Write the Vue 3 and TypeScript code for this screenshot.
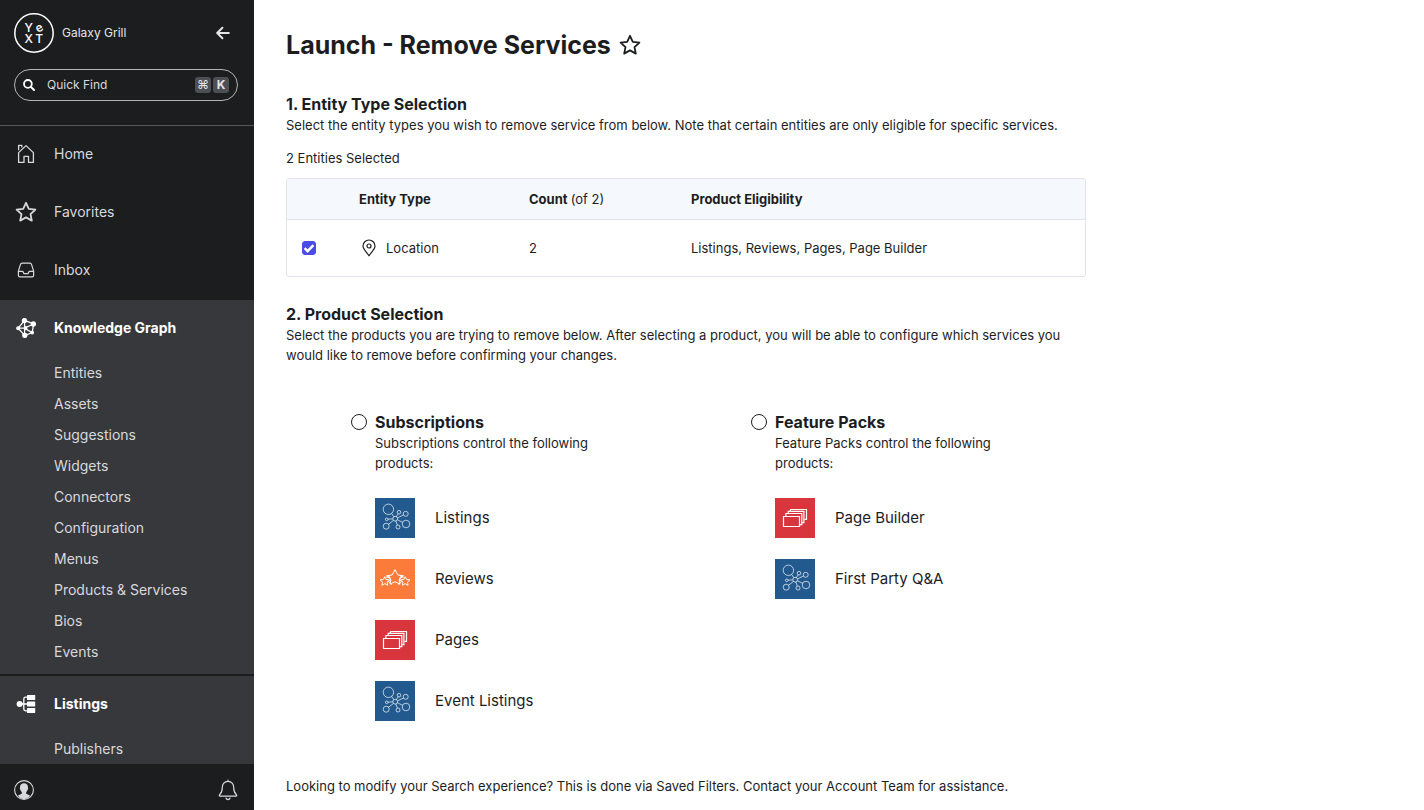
<script setup lang="ts">
import { ref } from 'vue'

type TileKind = 'network' | 'stars' | 'pages'

interface Product {
  name: string
  tile: TileKind
}

interface ProductGroup {
  id: string
  title: string
  description: string
  products: Product[]
}

const graphLinks: string[] = [
  'Entities',
  'Assets',
  'Suggestions',
  'Widgets',
  'Connectors',
  'Configuration',
  'Menus',
  'Products & Services',
  'Bios',
  'Events',
]

const groups: ProductGroup[] = [
  {
    id: 'subscriptions',
    title: 'Subscriptions',
    description: 'Subscriptions control the following products:',
    products: [
      { name: 'Listings', tile: 'network' },
      { name: 'Reviews', tile: 'stars' },
      { name: 'Pages', tile: 'pages' },
      { name: 'Event Listings', tile: 'network' },
    ],
  },
  {
    id: 'feature-packs',
    title: 'Feature Packs',
    description: 'Feature Packs control the following products:',
    products: [
      { name: 'Page Builder', tile: 'pages' },
      { name: 'First Party Q&A', tile: 'network' },
    ],
  },
]

const locationSelected = ref<boolean>(true)
const selectedGroup = ref<string>('')
</script>

<template>
  <div class="app">
    <aside class="sidebar">
      <header class="side-head">
        <div class="account">
          <svg class="logo" viewBox="0 0 40 40" role="img" aria-label="Yext">
            <circle cx="20" cy="20" r="19.2" fill="none" stroke="#fff" stroke-width="1.5" />
            <g fill="#fff" font-family="Inter, sans-serif" font-size="12" font-weight="500" text-anchor="middle">
              <text x="14.6" y="19">Y</text>
              <text x="25.4" y="18.6" transform="rotate(-30 25.400 15.200)">e</text>
              <text x="14.8" y="29.800">X</text>
              <text x="25.2" y="29.800">T</text>
            </g>
          </svg>
          <span class="account-name">Galaxy Grill</span>
          <button class="icon-button" type="button" aria-label="Collapse navigation">
            <svg width="14" height="14" viewBox="0 0 14 14" fill="none" stroke="#e4e5e8" stroke-width="2" stroke-linecap="round" stroke-linejoin="round">
              <path d="M12.8 7H1.6M6.4 1.8L1.2 7l5.2 5.2" />
            </svg>
          </button>
        </div>
        <button class="quick-find" type="button">
          <svg width="12" height="12" viewBox="0 0 12 12" fill="none" stroke="#fff" stroke-linecap="round">
            <circle cx="4.9" cy="4.9" r="3.9" stroke-width="1.8" />
            <path d="M7.9 7.9L11 11" stroke-width="2" />
          </svg>
          <span class="quick-label">Quick Find</span>
          <kbd class="key command">⌘</kbd>
          <kbd class="key">K</kbd>
        </button>
      </header>

      <nav class="nav" aria-label="Main">
        <a class="nav-row" href="#">
          <svg width="20" height="20" viewBox="0 0 20 20" fill="none" stroke="#d8d9dd" stroke-width="1.3" stroke-linejoin="round">
            <path d="M2.6 18.4V8.6L10 1.6l7.4 7v9.8h-4.9v-6H8v6z" />
            <path d="M2.6 6.2V1.4h3.2v2" />
          </svg>
          <span>Home</span>
        </a>
        <a class="nav-row" href="#">
          <svg width="22" height="22" viewBox="0 0 22 22" fill="none" stroke="#d8d9dd" stroke-width="1.8" stroke-linejoin="round">
            <path d="M11 1.8l2.8 6 6.6.8-4.9 4.5 1.3 6.5L11 16.4l-5.8 3.2 1.3-6.5-4.9-4.5 6.6-.8z" />
          </svg>
          <span>Favorites</span>
        </a>
        <a class="nav-row" href="#">
          <svg width="18" height="16" viewBox="0 0 18 16" fill="none" stroke="#d8d9dd" stroke-width="1.2" stroke-linejoin="round">
            <path d="M1.4 9.2L3.4 2.6Q3.8 1.2 5.2 1.2h7.6q1.4 0 1.8 1.4l2 6.6v4.2q0 1.4-1.4 1.4H2.8q-1.4 0-1.4-1.4z" />
            <path d="M1.4 9.4h4.4l1.2 2.2h4l1.2-2.2h4.400" />
          </svg>
          <span>Inbox</span>
        </a>

        <section class="group">
          <a class="nav-row strong" href="#">
            <svg width="20" height="20" viewBox="0 0 20 20" fill="#fff" stroke="#fff" stroke-width="1.3">
              <path fill="none" d="M2.2 10.2L8.6 2.4 17.6 6 16.2 14.6 8.8 17.6zM2.2 10.2h6.2L17.6 6M8.4 10.2l7.8 4.4M8.6 2.4v15.2" />
              <circle cx="2.2" cy="10.2" r="1.4" />
              <circle cx="8.4" cy="2.6" r="2" />
              <circle cx="17.4" cy="6" r="2" />
              <circle cx="16.2" cy="14.6" r="1.2" />
              <circle cx="8.8" cy="17.4" r="2" />
              <circle cx="9.6" cy="10" r="1.3" />
            </svg>
            <span>Knowledge Graph</span>
          </a>
          <ul class="sub">
            <li v-for="link in graphLinks" :key="link">
              <a href="#">{{ link }}</a>
            </li>
          </ul>
        </section>

        <section class="group">
          <a class="nav-row strong" href="#">
            <svg width="20" height="20" viewBox="0 0 20 20">
              <circle cx="3.6" cy="10" r="3" fill="#fff" />
              <path d="M5 10h8M12 3.2H9.6Q7.8 3.2 7.8 5v10q0 1.8 1.8 1.8H12" fill="none" stroke="#fff" stroke-width="1.3" />
              <g fill="#fff">
                <rect x="11" y="1" width="8.2" height="5" rx=".6" />
                <rect x="11" y="7.5" width="8.2" height="5" rx=".6" />
                <rect x="11" y="14" width="8.2" height="5" rx=".6" />
              </g>
            </svg>
            <span>Listings</span>
          </a>
          <ul class="sub">
            <li><a href="#">Publishers</a></li>
          </ul>
        </section>
      </nav>

      <footer class="side-foot">
        <button class="icon-button" type="button" aria-label="Profile">
          <svg width="20" height="20" viewBox="0 0 20 20">
            <circle cx="10" cy="10" r="9.4" fill="none" stroke="#d8d9dd" stroke-width="1.1" />
            <path d="M10 3.2c2.7 0 4.1 1.7 4 4.2 0 .5.3.8.1 1.5-.1.5-.5.6-.6 1-.2.9-.7 1.7-1.3 2.2v1.3c.8 1 3 1.2 4 2.4A8.8 8.8 0 0 1 10 19.2a8.8 8.8 0 0 1-6.2-3.4c1-1.2 3.2-1.4 4-2.4v-1.3c-.6-.5-1.1-1.3-1.3-2.2-.1-.4-.5-.5-.6-1-.2-.7.1-1 .1-1.5C5.9 4.9 7.3 3.2 10 3.2z" fill="#d8d9dd" />
          </svg>
        </button>
        <button class="icon-button" type="button" aria-label="Notifications">
          <svg width="20" height="22" viewBox="0 0 20 22" fill="none" stroke="#d8d9dd" stroke-width="1.2" stroke-linejoin="round" stroke-linecap="round">
            <path d="M10 2.4c-3.6 0-5.7 2.6-5.7 6.2 0 4.6-1.1 5.8-2.7 7.2-.7.7-.4 1.300.4 1.300h16c.8 0 1.100-.6.4-1.300-1.6-1.4-2.7-2.6-2.7-7.2 0-3.6-2.1-6.2-5.7-6.2zM10 2.4V1.2" />
            <path d="M8 19q.4 1.6 2 1.6T12 19" />
          </svg>
        </button>
      </footer>
    </aside>

    <main class="main">
      <div class="title">
        <h1>Launch - Remove Services</h1>
        <button class="icon-button" type="button" aria-label="Add to favorites">
          <svg width="22" height="22" viewBox="0 0 22 22" fill="none" stroke="#1c1d1f" stroke-width="1.8" stroke-linejoin="round">
            <path d="M11 1.8l2.8 6 6.6.8-4.9 4.5 1.3 6.5L11 16.4l-5.8 3.2 1.3-6.5-4.9-4.5 6.6-.8z" />
          </svg>
        </button>
      </div>

      <section class="entities">
        <h2>1. Entity Type Selection</h2>
        <p>Select the entity types you wish to remove service from below. Note that certain entities are only eligible for specific services.</p>
        <p class="selected">2 Entities Selected</p>
        <div class="table-frame">
          <table>
            <colgroup>
              <col class="c-check" />
              <col class="c-type" />
              <col class="c-count" />
              <col />
            </colgroup>
            <thead>
              <tr>
                <td></td>
                <th scope="col">Entity Type</th>
                <th scope="col">Count <span class="light">(of 2)</span></th>
                <th scope="col">Product Eligibility</th>
              </tr>
            </thead>
            <tbody>
              <tr>
                <td>
                  <span class="check">
                    <input id="entity-location" v-model="locationSelected" type="checkbox" />
                    <svg v-if="locationSelected" width="14" height="14" viewBox="0 0 14 14" fill="none" stroke="#fff" stroke-width="2.4" aria-hidden="true">
                      <path d="M2.6 7.2l3 3 5.8-6" />
                    </svg>
                  </span>
                </td>
                <td>
                  <label class="entity" for="entity-location">
                    <svg width="14" height="18" viewBox="0 0 14 18" fill="none" stroke="#1c1d1f" stroke-width="1.2" stroke-linejoin="round">
                      <path d="M7 16.8C5.6 14 1 10.6 1 7a6 6 0 0 1 12 0c0 3.6-4.6 7-6 9.8z" />
                      <circle cx="7" cy="7" r="2" />
                    </svg>
                    Location
                  </label>
                </td>
                <td>2</td>
                <td>Listings, Reviews, Pages, Page Builder</td>
              </tr>
            </tbody>
          </table>
        </div>
      </section>

      <section class="selection">
        <h2>2. Product Selection</h2>
        <p>Select the products you are trying to remove below. After selecting a product, you will be able to configure which services you would like to remove before confirming your changes.</p>
        <div class="choices">
          <div v-for="group in groups" :key="group.id" class="choice">
            <input :id="group.id" v-model="selectedGroup" type="radio" name="product-group" :value="group.id" />
            <div class="choice-body">
              <label :for="group.id">{{ group.title }}</label>
              <p>{{ group.description }}</p>
              <ul class="products">
                <li v-for="product in group.products" :key="product.name">
                  <svg class="tile" :class="product.tile" viewBox="0 0 40 40" fill="none" stroke="#fff" aria-hidden="true">
                    <g v-if="product.tile === 'network'" stroke-width=".8" stroke-opacity=".85">
                      <circle cx="13.4" cy="11.3" r="5.2" />
                      <circle cx="24" cy="14.2" r="1.8" />
                      <circle cx="30.7" cy="15.8" r="2.5" />
                      <circle cx="20.2" cy="20.7" r="2.4" />
                      <circle cx="11.7" cy="21.3" r="1.3" />
                      <circle cx="11.2" cy="28.2" r="3" />
                      <circle cx="23" cy="29" r="2" />
                      <circle cx="31" cy="26" r="3.8" />
                      <path d="M16.6 15.4l2.2 3.3M21.3 18.6l1.9-2.8M22.5 19.9l5.9-2.9M17.8 20.8l-4.8.4M18.5 22.4l-5 3.9M20.8 23l1.6 4.1M22.5 21.8l5.1 2.5" />
                    </g>
                    <g v-else-if="product.tile === 'stars'" stroke-width="1" stroke-linejoin="round">
                      <path d="M16.4 24.4l-1.4.8.9-4.8-4.5-3.6 5.7-.8L20 10.6l2.9 5.4 5.7.8-4.5 3.6.9 4.8-5-2.5-3.6 1.7" />
                      <path d="M9.8 17.7l1.4 2.8 3.3.4-2.4 2.2.6 3.2-2.9-1.6-2.9 1.6.6-3.2-2.4-2.2 3.3-.4z" />
                      <path d="M30.2 17.7l1.4 2.8 3.3.4-2.4 2.2.6 3.2-2.9-1.6-2.9 1.6.6-3.2-2.4-2.2 3.3-.4z" />
                      <path d="M11.4 18.4l3-1 1.2 3.4-2 1.4 3 3.6M28.6 18.4l-3-1-1.2 3.4 2 1.4-3 3.6" />
                    </g>
                    <g v-else stroke-width="1.2">
                      <path d="M8.5 18.5h16v10h-16z" />
                      <path d="M10.9 18v-2.5h15.9v11.2h-1.8" />
                      <path d="M13.2 15v-1.7h15.7v11.4h-1.7" />
                      <path d="M15.5 13v-1.5h16v9.9h-2" />
                    </g>
                  </svg>
                  <span>{{ product.name }}</span>
                </li>
              </ul>
            </div>
          </div>
        </div>
      </section>

      <p class="note">Looking to modify your Search experience? This is done via Saved Filters. Contact your Account Team for assistance.</p>
    </main>
  </div>
</template>

<style>
body {
  margin: 0;
  background: #fff;
}
</style>

<style scoped>
.app {
  display: flex;
  min-height: 100vh;
  font-family: Inter, "Liberation Sans", sans-serif;
  font-size: 13px;
  line-height: 20px;
  color: #1c1d1f;
}

h1,
h2,
p,
ul {
  margin: 0;
  padding: 0;
}

ul {
  list-style: none;
}

a {
  color: inherit;
  text-decoration: none;
}

button {
  font: inherit;
  color: inherit;
  background: none;
  border: 0;
  padding: 0;
  cursor: pointer;
}

svg {
  display: block;
  flex: none;
}

.icon-button {
  display: flex;
}

.sidebar {
  position: sticky;
  top: 0;
  display: flex;
  flex-direction: column;
  flex: none;
  box-sizing: border-box;
  width: 254px;
  height: 100vh;
  background: #1c1d1f;
  color: #d8d9dd;
}

.side-head {
  padding: 13px 16px 24px 14px;
  border-bottom: 1px solid #55565a;
}

.account {
  display: flex;
  align-items: center;
  gap: 8px;
  padding-right: 8px;
  font-size: 12px;
}

.account-name {
  flex: 1;
  color: #e4e5e8;
}

.logo {
  width: 40px;
  height: 40px;
}

.quick-find {
  display: flex;
  align-items: center;
  gap: 2px;
  box-sizing: border-box;
  width: 100%;
  height: 32px;
  margin-top: 16px;
  padding: 0 8px;
  border: 1px solid #b4b5b9;
  border-radius: 16px;
  font-size: 12px;
  color: #d8d9dd;
}

.quick-label {
  flex: 1;
  padding-left: 10px;
  text-align: left;
}

.key {
  width: 16px;
  height: 16px;
  border-radius: 3px;
  background: #4c4f53;
  color: #e4e5e8;
  font-family: Inter, "DejaVu Sans", sans-serif;
  font-size: 12px;
  font-weight: 700;
  line-height: 16px;
  text-align: center;
}

.command {
  font-weight: 400;
}

.nav {
  flex: 1;
  min-height: 0;
  overflow-y: auto;
  scrollbar-width: none;
  font-size: 14px;
}

.nav-row {
  display: grid;
  grid-template-columns: 24px 1fr;
  align-items: center;
  gap: 16px;
  height: 56px;
  margin-bottom: 2px;
  padding: 0 14px;
}

.nav-row svg {
  justify-self: center;
}

.strong {
  margin-bottom: 1px;
  font-weight: 700;
  color: #fff;
}

.group {
  margin-bottom: 2px;
  padding-bottom: 7px;
  background: #37383c;
}

.sub a {
  display: block;
  padding-left: 54px;
  line-height: 31px;
}

.side-foot {
  display: flex;
  flex: none;
  align-items: center;
  justify-content: space-between;
  height: 46px;
  padding: 6px 16px 0 14px;
  box-sizing: border-box;
}

.main {
  flex: 1;
  min-width: 0;
  box-sizing: border-box;
  padding: 29px 32px 14px;
}

.main > * {
  max-width: 800px;
}

.title {
  display: flex;
  align-items: center;
  gap: 8px;
}

h1 {
  font-size: 25px;
  line-height: 32px;
  font-weight: 700;
}

h2 {
  font-size: 16px;
  line-height: 22px;
  font-weight: 700;
}

.entities {
  margin-top: 32px;
}

.selected {
  margin: 13px 0 10px;
}

.table-frame {
  border: 1px solid #e1e5eb;
  border-radius: 3px;
  overflow: hidden;
}

table {
  width: 100%;
  border-collapse: collapse;
  table-layout: fixed;
}

.c-check {
  width: 57px;
}

.c-type {
  width: 170px;
}

.c-count {
  width: 162px;
}

th,
td {
  padding: 0 15px;
  text-align: left;
}

thead tr {
  height: 40px;
  background: #f5f8fd;
}

thead th,
thead td {
  border-bottom: 1px solid #e1e5eb;
}

tbody tr {
  height: 57px;
}

.light {
  font-weight: 400;
}

.check {
  display: grid;
  width: 14px;
}

.check > * {
  grid-area: 1 / 1;
}

.check svg {
  pointer-events: none;
}

.check input {
  appearance: none;
  width: 14px;
  height: 14px;
  margin: 0;
  border: 1px solid #4b4be8;
  border-radius: 3px;
}

.check input:checked {
  background: #4b4be8;
}

.entity {
  display: flex;
  align-items: center;
  gap: 10px;
  padding-left: 3px;
}

.selection {
  margin-top: 26px;
}

.choices {
  display: grid;
  grid-template-columns: 1fr 1fr;
  margin-top: 46px;
}

.choice {
  display: flex;
  align-items: flex-start;
  gap: 8px;
  padding: 0 64px 0 65px;
}

.choice > input {
  appearance: none;
  flex: none;
  width: 16px;
  height: 16px;
  margin: 3px 0 0;
  border: 1px solid #1c1d1f;
  border-radius: 50%;
}

.choice > input:checked {
  border-width: 5px;
}

.choice label {
  display: block;
  font-size: 16px;
  line-height: 22px;
  font-weight: 700;
}

.products {
  display: grid;
  gap: 21px;
  margin-top: 25px;
  font-size: 15px;
}

.products li {
  display: flex;
  align-items: center;
  gap: 20px;
}

.tile {
  width: 40px;
  height: 40px;
}

.network {
  background: #225a8f;
}

.stars {
  background: #fb7b3a;
}

.pages {
  background: #d8353c;
}

.note {
  margin-top: 55px;
}
</style>
